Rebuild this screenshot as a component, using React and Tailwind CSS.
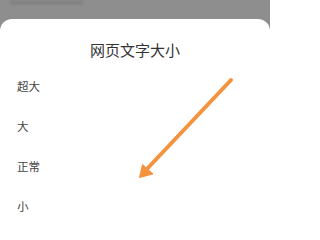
import React from 'react';

const sizes = ["超大", "大", "正常", "小"];

const App = () => {
  return (
    <div
      className="relative w-[270px] h-[218px] overflow-hidden bg-[#8e8e8e] flex flex-col"
      style={{ fontFamily: '"Noto Sans CJK SC", "Noto Sans", sans-serif' }}
    >
      {/* dimmed page behind */}
      <div className="h-[19px] shrink-0 pl-[10px]">
        <div className="w-[73px] h-[5px] bg-[#838383] blur-[1px]" />
      </div>

      {/* bottom sheet */}
      <div className="flex-1 bg-white rounded-t-[12px]">
        <div className="pt-[21px] text-center text-[15px] leading-[20px] text-[#333]">
          网页文字大小
        </div>
        <div className="mt-[7px] px-[17px]">
          {sizes.map((s) => (
            <div key={s} className="h-10 flex items-center text-[11.5px] text-[#444]">
              {s}
            </div>
          ))}
        </div>
      </div>

      {/* arrow annotation */}
      <svg className="absolute left-0 top-0 pointer-events-none" width="270" height="218" viewBox="0 0 270 218">
        <line x1="231" y1="80" x2="146" y2="170" stroke="#f5923e" strokeWidth="4" strokeLinecap="round" />
        <polygon points="139.5,177.5 142.5,164.5 153,174" fill="#f5923e" stroke="#f5923e" strokeWidth="1" strokeLinejoin="round" />
      </svg>
    </div>
  );
};

export default App;
